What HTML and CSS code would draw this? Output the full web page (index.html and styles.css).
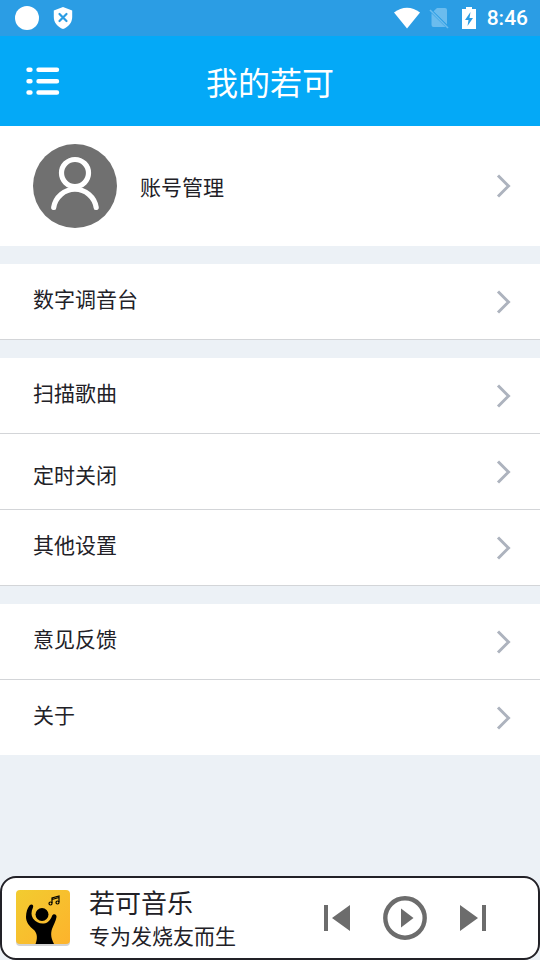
FILE: index.html
```html
<!DOCTYPE html>
<html lang="zh-CN">
<head>
<meta charset="utf-8">
<meta name="viewport" content="width=device-width, initial-scale=1">
<title>我的若可</title>
<link rel="stylesheet" href="styles.css">
</head>
<body>
<svg class="defs" aria-hidden="true">
  <symbol id="chevron" viewBox="0 0 16 24"><path d="M2 1.5 12.5 12 2 22.5" fill="none" stroke="#adb3be" stroke-width="3"/></symbol>
</svg>
<div class="status">
  <div class="status-group">
    <svg width="24" height="24" viewBox="0 0 24 24" aria-hidden="true"><circle cx="12" cy="12" r="12" fill="#fff"/></svg>
    <svg class="shield" width="20" height="24" viewBox="0 0 20 24" aria-hidden="true"><path d="M10 1 19.2 4.5V11c0 5.500-3.700 10-9.200 12C4.500 21 .8 16.500.8 11V4.500z" fill="#fff"/><path d="M6.500 8l7 7m0-7-7 7" stroke="#2b9de4" stroke-width="2.200" stroke-linecap="round"/></svg>
  </div>
  <div class="status-group">
    <svg width="26" height="22" viewBox="0 0 26 22" aria-hidden="true"><path d="M0 5.500C8-1 18-1 26 5.500L13 21.500z" fill="#fff"/></svg>
    <svg class="sim" width="20" height="22" viewBox="0 0 20 22" aria-hidden="true"><path d="M8 1h8q2 0 2 2v14.500L4.500 4.300zM2.500 6.300 16.500 20H4.500q-2 0-2-2z" fill="#6bbcee"/><path d="M1 3l18 18" stroke="#6bbcee" stroke-width="1.600"/></svg>
    <svg class="battery" width="14" height="22" viewBox="0 0 14 22" aria-hidden="true"><path d="M4 0h6v2h4v20H0V2h4z" fill="#fff"/><path d="M8.500 5 3 13h3.500L5.500 19 11 11H7.500z" fill="#2b9de4"/></svg>
    <span class="clock">8:46</span>
  </div>
</div>
<header class="header">
  <button class="icon-button" type="button" aria-label="菜单">
    <svg width="34" height="28" viewBox="0 0 34 28"><path d="M2.500 2.800h2M12.500 2.800H31M2.500 14.200h2M12.500 14.200H31M2.500 25.500h2M12.500 25.500H31" stroke="#fff" stroke-width="4.400" stroke-linecap="round"/></svg>
  </button>
  <h1 class="title">我的若可</h1>
</header>
<main class="content">
  <nav class="group">
    <a class="row account" href="#account">
      <svg class="avatar" width="84" height="84" viewBox="0 0 84 84" aria-hidden="true"><circle cx="42" cy="42" r="42" fill="#707070"/><g fill="none" stroke="#fff" stroke-width="5.200" stroke-linecap="round"><circle cx="42" cy="29" r="13.500"/><path d="M20.700 63.500a21.500 21.500 0 0 1 42.500 0"/></g></svg>
      <span class="account-label">账号管理</span>
      <svg class="chevron" aria-hidden="true"><use href="#chevron"/></svg>
    </a>
  </nav>
  <nav class="group">
    <a class="row" href="#mixer"><span class="label">数字调音台</span><svg class="chevron" aria-hidden="true"><use href="#chevron"/></svg></a>
  </nav>
  <nav class="group">
    <a class="row" href="#scan"><span class="label">扫描歌曲</span><svg class="chevron" aria-hidden="true"><use href="#chevron"/></svg></a>
    <a class="row" href="#timer"><span class="label label-low">定时关闭</span><svg class="chevron" aria-hidden="true"><use href="#chevron"/></svg></a>
    <a class="row" href="#settings"><span class="label">其他设置</span><svg class="chevron" aria-hidden="true"><use href="#chevron"/></svg></a>
  </nav>
  <nav class="group">
    <a class="row" href="#feedback"><span class="label">意见反馈</span><svg class="chevron" aria-hidden="true"><use href="#chevron"/></svg></a>
    <a class="row plain" href="#about"><span class="label">关于</span><svg class="chevron" aria-hidden="true"><use href="#chevron"/></svg></a>
  </nav>
</main>
<footer class="player">
  <svg class="cover" width="56" height="58" viewBox="0 0 56 58" aria-hidden="true">
    <defs><linearGradient id="gold" x1="0" y1="0" x2="1" y2="1"><stop offset="0" stop-color="#f2cc30"/><stop offset="1" stop-color="#fdb32c"/></linearGradient></defs>
    <rect x="1" y="3" width="54" height="54" rx="4" fill="#d2d2d2"/>
    <rect x="1" y="1" width="54" height="54" rx="4" fill="url(#gold)"/>
    <circle cx="27" cy="25.500" r="6.500"/>
    <path d="M14.500 16.500c2-2 4.500-.5 3.500 2-2 4-2 8 0 11 3 4 7 5.500 11 5 4-.5 6.500-3.500 8-7.500 1-3 5-2 4.500 1-.6 4-3 8-4.500 12-1.500 5-1 9 2 15H20.500c2-5 2-10-1-13.500C14 37 11 33 11 28c0-5 1.500-9 3.500-11.500z"/>
    <path d="M37 14V9l7-2v6M37 10.500l7-2" fill="none" stroke="#000" stroke-width="1.200"/><g fill="none" stroke="#000" stroke-width="1.200"><circle cx="35.500" cy="14.500" r="1.500"/><circle cx="42.500" cy="13.500" r="1.500"/></g>
  </svg>
  <div class="track">
    <div class="track-title">若可音乐</div>
    <div class="track-sub">专为发烧友而生</div>
  </div>
  <div class="controls">
    <button class="icon-button" type="button" aria-label="上一首"><svg width="26" height="26" viewBox="0 0 26 26"><path d="M0 0h4v26H0zM26 0v26L8 13z" fill="#6c6c6c"/></svg></button>
    <button class="icon-button" type="button" aria-label="播放"><svg width="44" height="44" viewBox="0 0 44 44"><circle cx="22" cy="22" r="19.700" fill="none" stroke="#6c6c6c" stroke-width="4.400"/><path d="M18 12.500v19L30.500 22z" fill="#6c6c6c"/></svg></button>
    <button class="icon-button" type="button" aria-label="下一首"><svg width="26" height="26" viewBox="0 0 26 26"><path d="M22 0h4v26h-4zM0 0v26l18-13z" fill="#6c6c6c"/></svg></button>
  </div>
</footer>
</body>
</html>
```
FILE: styles.css
```css
* {
  box-sizing: border-box;
}

body {
  display: flex;
  flex-direction: column;
  min-height: 100vh;
  margin: 0;
  background: #ecf1f6;
  color: #222127;
  font-family: "Noto Sans CJK SC", sans-serif;
  font-size: 21px;
  line-height: 30px;
}

svg {
  display: block;
  flex: none;
}

.defs {
  position: absolute;
  width: 0;
  height: 0;
}

.status {
  display: flex;
  align-items: center;
  justify-content: space-between;
  height: 36px;
  padding: 0 12px 0 15px;
  background: #2b9de4;
  color: #fff;
}

.status-group {
  display: flex;
  align-items: center;
}

.shield {
  margin-left: 14px;
}

.sim {
  margin-left: 9px;
}

.battery {
  margin-left: 13px;
}

.clock {
  margin-left: 11px;
  font-family: Roboto, sans-serif;
  font-size: 21px;
  font-weight: 500;
}

.header {
  display: grid;
  grid-template-columns: 34px 1fr 34px;
  align-items: center;
  height: 90px;
  padding: 0 26px;
  background: #04a9f7;
}

.title {
  margin: 0;
  color: #fff;
  font-size: 32px;
  font-weight: 400;
  line-height: 44px;
  text-align: center;
}

.icon-button {
  padding: 0;
  border: 0;
  background: none;
  cursor: pointer;
}

.content {
  display: flex;
  flex: 1;
  flex-direction: column;
  gap: 18px;
}

.row {
  display: flex;
  align-items: center;
  height: 76px;
  padding: 0 28px 0 33px;
  border-bottom: 1px solid #d3d5d8;
  background: #fff;
  color: inherit;
  text-decoration: none;
}

.plain {
  height: 75px;
  border-bottom: 0;
}

.account {
  height: 120px;
  border-bottom: 0;
}

.account-label {
  margin-left: 23px;
}

.label {
  padding-bottom: 8px;
}

.label-low {
  padding: 4px 0 0;
}

.chevron {
  width: 16px;
  height: 24px;
  margin-left: auto;
}

.player {
  display: flex;
  align-items: center;
  height: 84px;
  padding: 0 52px 0 13px;
  border: 2px solid #222127;
  border-radius: 16px;
  background: #fff;
}

.track {
  margin-left: 18px;
}

.track-title {
  font-size: 26px;
  line-height: 34px;
}

.track-sub {
  line-height: 32px;
}

.controls {
  display: flex;
  align-items: center;
  gap: 33px;
  margin-left: auto;
}
```
